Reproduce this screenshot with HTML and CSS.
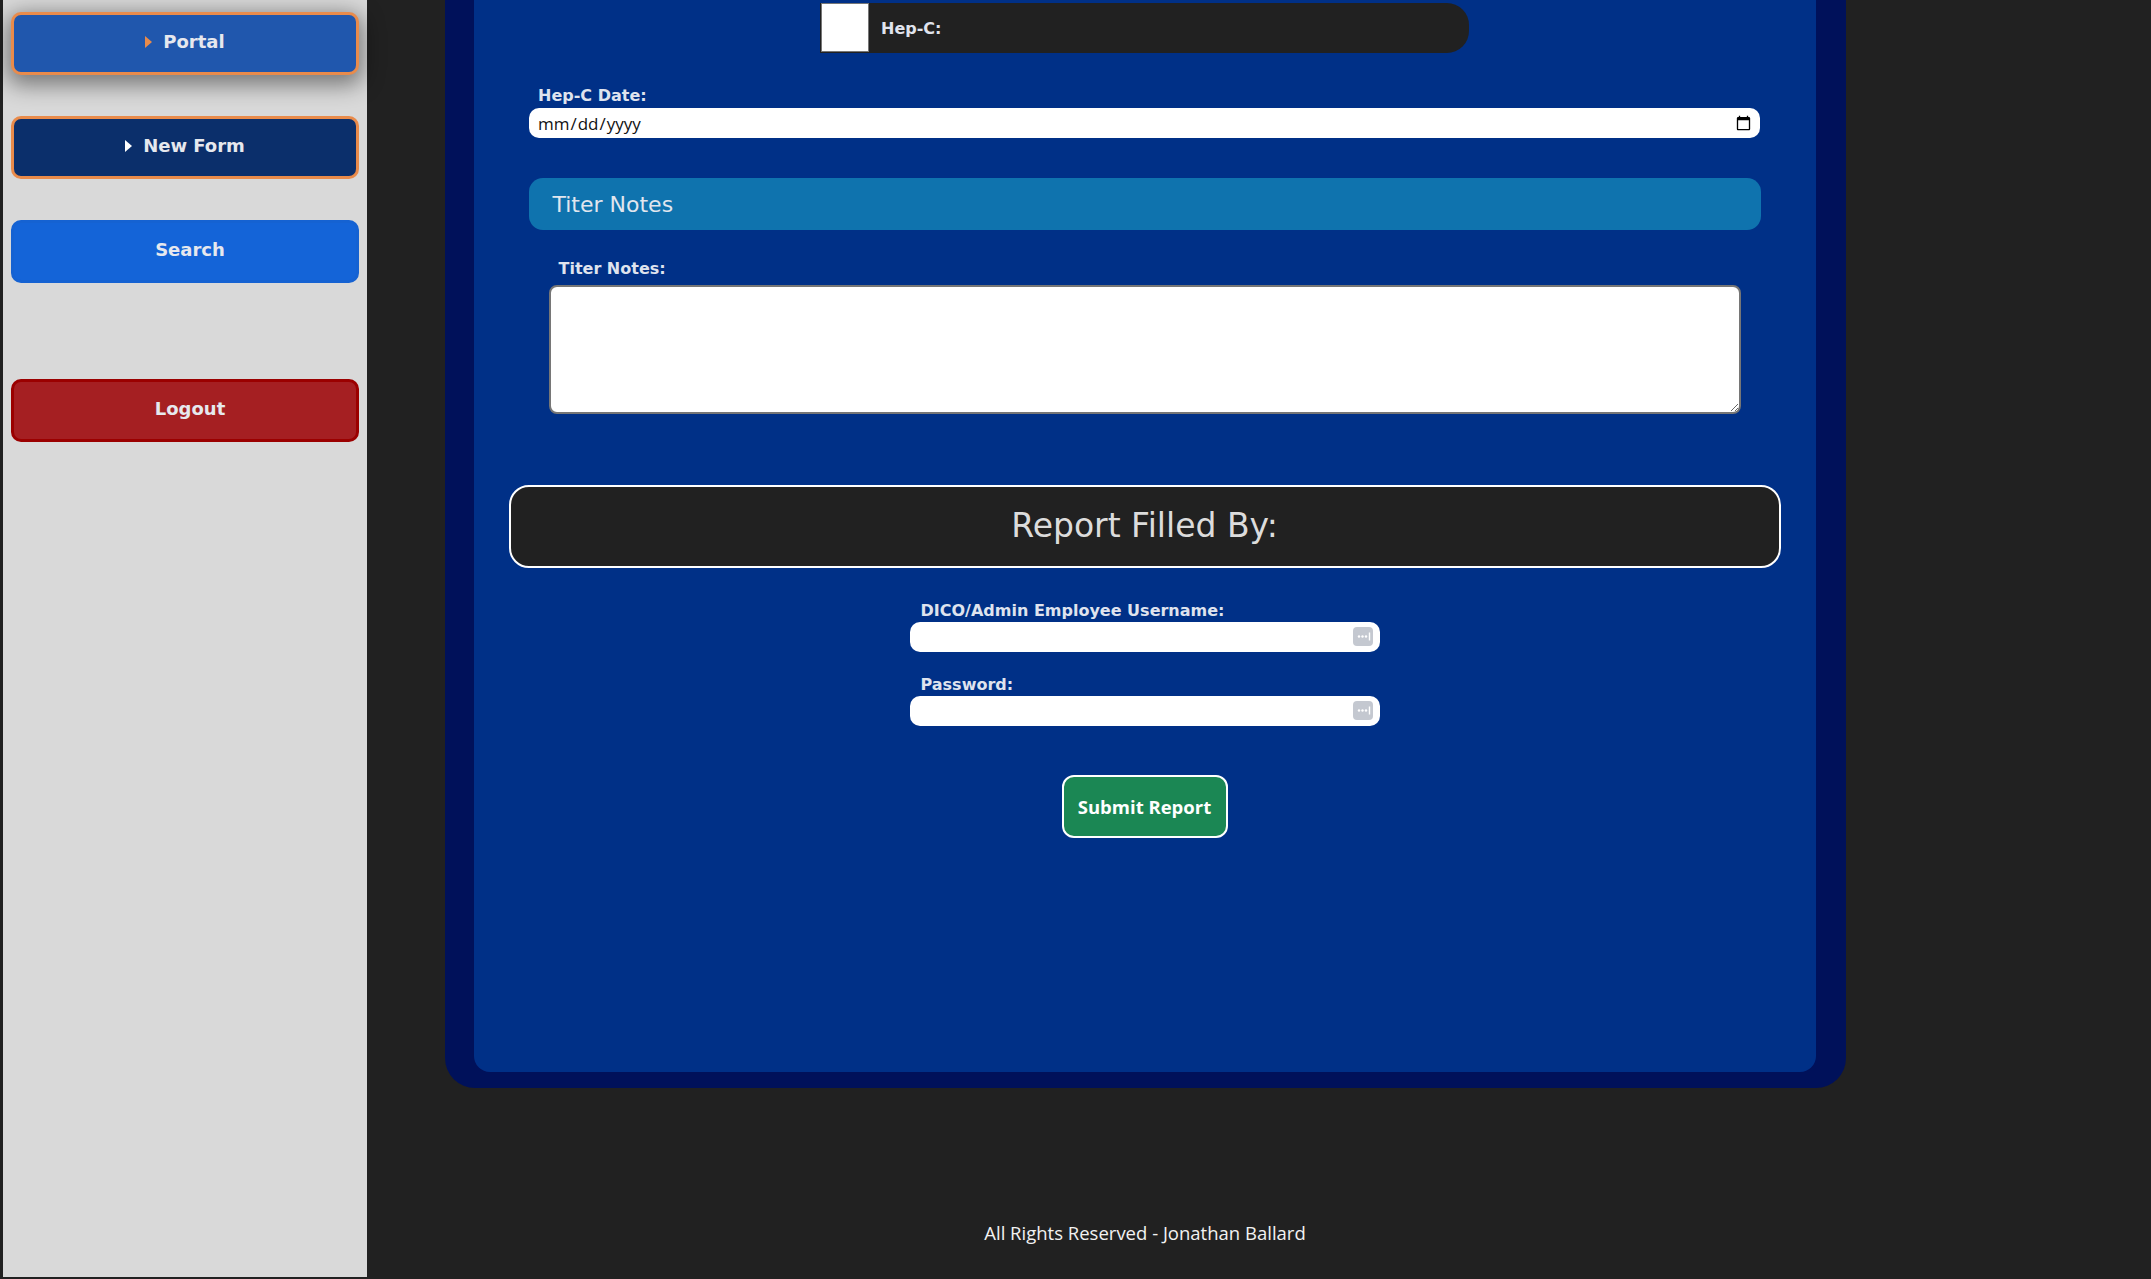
FILE: index.html
```html
<!DOCTYPE html>
<html lang="en">
<head>
    <meta charset="UTF-8">
    <meta name="viewport" content="width=device-width, initial-scale=1.0">
    <title>Titer Report</title>
    <link rel="stylesheet" href="styles.css">
</head>
<body>
    <!-- Menu lateral -->
    <aside class="sidebar">
        <nav class="side-nav">
            <a class="side-btn btn-portal" href="#"><span class="caret caret-orange"></span>Portal</a>
            <a class="side-btn btn-newform" href="#"><span class="caret"></span>New Form</a>
            <a class="side-btn btn-search" href="#">Search</a>
            <a class="side-btn btn-logout" href="#">Logout</a>
        </nav>
    </aside>

    <main class="main">
        <div class="form-shell">
            <form class="form-card" onsubmit="return false;">
                <div class="check-row">
                    <input type="checkbox" id="hepc" class="big-check">
                    <label for="hepc">Hep-C:</label>
                </div>

                <div class="field field-date">
                    <label class="field-label" for="hepc-date">Hep-C Date:</label>
                    <input type="date" id="hepc-date" class="date-input">
                </div>

                <div class="section-bar">Titer Notes</div>

                <div class="field field-notes">
                    <label class="field-label" for="titer-notes">Titer Notes:</label>
                    <textarea id="titer-notes" class="notes-input"></textarea>
                </div>

                <div class="report-box">
                    <h2>Report Filled By:</h2>
                </div>

                <div class="field field-login">
                    <label class="field-label" for="username">DICO/Admin Employee Username:</label>
                    <div class="input-wrap">
                        <input type="text" id="username" class="login-input">
                        <span class="pm-icon">
                            <svg width="20" height="19" viewBox="0 0 20 19"><rect width="20" height="19" rx="4" fill="#c4c8d0"/><circle cx="6" cy="9.5" r="1.2" fill="#fff"/><circle cx="9.5" cy="9.5" r="1.2" fill="#fff"/><circle cx="13" cy="9.5" r="1.2" fill="#fff"/><rect x="15.8" y="5.5" width="1.4" height="8" fill="#fff"/></svg>
                        </span>
                    </div>
                </div>

                <div class="field field-login field-password">
                    <label class="field-label" for="password">Password:</label>
                    <div class="input-wrap">
                        <input type="password" id="password" class="login-input">
                        <span class="pm-icon">
                            <svg width="20" height="19" viewBox="0 0 20 19"><rect width="20" height="19" rx="4" fill="#c4c8d0"/><circle cx="6" cy="9.5" r="1.2" fill="#fff"/><circle cx="9.5" cy="9.5" r="1.2" fill="#fff"/><circle cx="13" cy="9.5" r="1.2" fill="#fff"/><rect x="15.8" y="5.5" width="1.4" height="8" fill="#fff"/></svg>
                        </span>
                    </div>
                </div>

                <button type="submit" class="submit-btn">Submit Report</button>
            </form>
        </div>

        <footer class="footer">All Rights Reserved - Jonathan Ballard</footer>
    </main>
</body>
</html>
```

FILE: styles.css
```css
/* Reset et base */
* {
    box-sizing: border-box;
}

body {
    margin: 0;
    background-color: #212121;
    font-family: "DejaVu Sans", Verdana, sans-serif;
    display: flex;
    align-items: flex-start;
    min-height: 100vh;
    overflow: hidden;
}

/* Sidebar */
.sidebar {
    flex: 0 0 364px;
    margin-left: 3px;
    height: calc(100vh - 2px);
    background-color: #d9d9d9;
    padding: 12px 8px;
}

.side-nav {
    display: flex;
    flex-direction: column;
    gap: 41px;
}

.side-btn {
    display: flex;
    align-items: center;
    justify-content: center;
    height: 63px;
    padding-bottom: 4px;
    border: 3px solid transparent;
    border-radius: 10px;
    color: #e6e8ee;
    font-size: 18px;
    font-weight: bold;
    text-decoration: none;
}

.btn-portal {
    background-color: #2057ad;
    border-color: #e98b4b;
    box-shadow: 0 6px 22px 4px rgba(0, 0, 0, 0.45);
}

.btn-newform {
    background-color: #0b2f6b;
    border-color: #e98b4b;
}

.btn-search {
    background-color: #1464d8;
    border-color: #1562d2;
    padding-left: 10px;
}

.btn-logout {
    background-color: #a51f22;
    border-color: #9b0000;
    padding-left: 10px;
    margin-top: 55px;
}

.caret {
    width: 0;
    height: 0;
    border-left: 7px solid #fff;
    border-top: 6px solid transparent;
    border-bottom: 6px solid transparent;
    margin-right: 11px;
}

.caret-orange {
    border-left-color: #e98b4b;
}

/* Zone principale */
.main {
    flex: 0 0 1556px;
    display: flex;
    flex-direction: column;
    align-items: center;
}

.form-shell {
    width: 1401px;
    background-color: #00115a;
    padding: 0 30px 16px 29px;
    border-radius: 0 0 30px 30px;
}

.form-card {
    background-color: #003087;
    border-radius: 0 0 16px 16px;
    padding: 3px 0 234px;
    display: flex;
    flex-direction: column;
    align-items: center;
}

.check-row {
    width: 649px;
    height: 50px;
    background-color: #212121;
    border-radius: 0 22px 22px 0;
    display: flex;
    align-items: center;
}

.big-check {
    appearance: none;
    -webkit-appearance: none;
    align-self: flex-start;
    width: 48px;
    height: 49px;
    margin: 0 0 0 1px;
    background-color: #fff;
    border: 1px solid #767676;
}

.check-row label {
    margin-left: 12px;
    color: #e0e4ee;
    font-size: 16px;
    font-weight: bold;
}

.field-label {
    display: block;
    color: #dfe3ee;
    font-size: 16px;
    line-height: 19px;
    font-weight: bold;
}

.field-date {
    width: 1231px;
    margin-top: 33px;
}

.field-date .field-label {
    margin: 0 0 3px 9px;
}

.date-input {
    display: block;
    width: 100%;
    height: 30px;
    border: none;
    border-radius: 10px;
    padding: 0 6px 0 8px;
    font-family: "Open Sans", sans-serif;
    font-size: 17px;
    color: #111;
    background-color: #fff;
}

.section-bar {
    width: 1232px;
    height: 52px;
    margin-top: 40px;
    padding-left: 24px;
    display: flex;
    align-items: center;
    background-color: #0f73ae;
    border-radius: 14px;
    color: #e1e6ee;
    font-size: 22px;
}

.field-notes {
    width: 1192px;
    margin-top: 29px;
}

.field-notes .field-label {
    margin: 0 0 7px 10px;
}

.notes-input {
    display: block;
    width: 100%;
    height: 129px;
    border: 2px solid #767676;
    border-radius: 8px;
    background-color: #fff;
    resize: vertical;
}

.report-box {
    width: 1272px;
    height: 83px;
    margin-top: 71px;
    display: flex;
    align-items: center;
    justify-content: center;
    background-color: #212121;
    border: 2px solid #fff;
    border-radius: 20px;
}

.report-box h2 {
    margin: 0 0 2px;
    color: #dcdcdc;
    font-size: 33px;
    font-weight: normal;
}

.field-login {
    width: 470px;
    margin-top: 33px;
}

.field-password {
    margin-top: 23px;
}

.field-login .field-label {
    margin: 0 0 2px 11px;
}

.input-wrap {
    position: relative;
}

.login-input {
    display: block;
    width: 100%;
    height: 30px;
    border: none;
    border-radius: 10px;
    padding: 0 34px 0 10px;
    background-color: #fff;
    font-size: 16px;
}

.pm-icon {
    position: absolute;
    right: 7px;
    top: 5px;
    display: flex;
}

.submit-btn {
    width: 166px;
    height: 63px;
    margin-top: 49px;
    background-color: #1b8754;
    border: 2px solid #fff;
    border-radius: 12px;
    color: #fff;
    font-family: "Open Sans", sans-serif;
    font-size: 18.5px;
    font-weight: bold;
    cursor: pointer;
}

.footer {
    margin-top: 133px;
    color: #f2f2f2;
    font-family: "Open Sans", sans-serif;
    font-size: 18.5px;
    line-height: 24px;
}
```
